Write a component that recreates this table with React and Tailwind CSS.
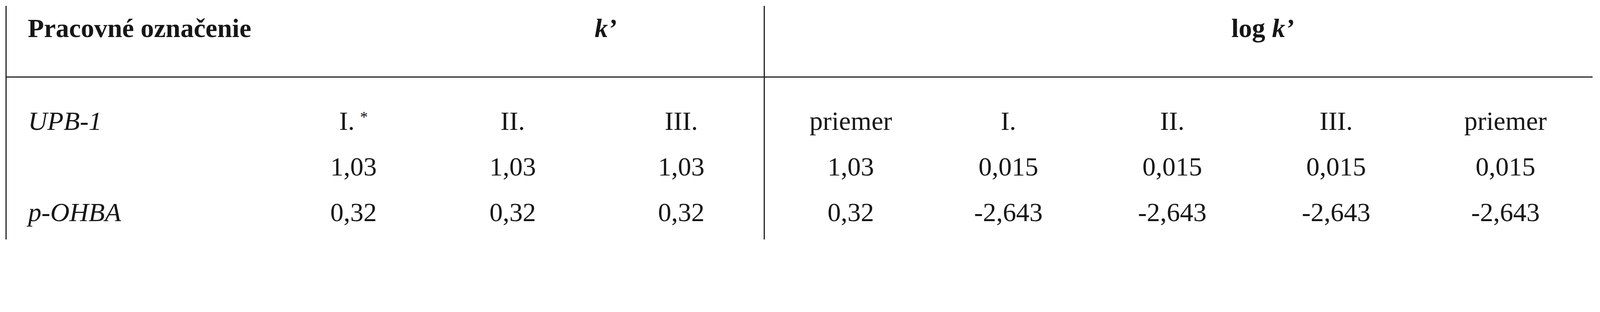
import React from "react";

const grid =
  "grid grid-cols-[701px_374px_441px_422px_443px_367px_472px_367px_473px]";

const rows = [
  {
    label: "UPB-1",
    h: "h-[194px] pt-[77px]",
    cells: ["I.", "II.", "III.", "priemer", "I.", "II.", "III.", "priemer"],
  },
  {
    label: "",
    h: "h-[117px]",
    cells: ["1,03", "1,03", "1,03", "1,03", "0,015", "0,015", "0,015", "0,015"],
  },
  {
    label: "p-OHBA",
    h: "h-[104px]",
    cells: ["0,32", "0,32", "0,32", "0,32", "-2,643", "-2,643", "-2,643", "-2,643"],
  },
];

const App = () => {
  return (
    <div className="w-full h-[653px] bg-white pl-[14px] pt-[15px] text-[#161616] font-['Liberation_Serif','Times_New_Roman',serif] text-[68px] leading-[68px]">
      <div className={`${grid} w-[4064px] border-l-[3.5px] border-[#222]`}>
        {/* header */}
        <div className="h-[184px] pt-[23px] pl-[54px] border-b-[3.5px] border-[#222] font-bold whitespace-nowrap">
          Pracovné označenie
        </div>
        <div className="col-span-3 h-[184px] pt-[23px] pl-[428px] text-center border-b-[3.5px] border-[#222] font-bold italic">
          k’
        </div>
        <div className="h-[184px] border-b-[3.5px] border-l-[3.5px] border-[#222]"></div>
        <div className="col-span-4 h-[184px] pt-[23px] pr-[10px] text-center border-b-[3.5px] border-[#222] font-bold">
          log <span className="italic">k’</span>
        </div>

        {/* body */}
        {rows.map((r, ri) =>
          [
            <div key={`l${ri}`} className={`${r.h} pl-[55px] italic whitespace-nowrap`}>
              {r.label}
            </div>,
            ...r.cells.map((c, ci) => (
              <div
                key={`c${ri}-${ci}`}
                className={`${r.h} text-center whitespace-nowrap ${
                  ci === 3 ? "border-l-[3.5px] border-[#222]" : ""
                } ${ci === 7 ? "pl-[27px]" : ""}`}
              >
                {c}
                {ri === 0 && ci === 0 ? (
                  <sup className="text-[40px] ml-[14px] top-[-20px]">*</sup>
                ) : null}
              </div>
            )),
          ]
        )}
      </div>
    </div>
  );
};

export default App;
